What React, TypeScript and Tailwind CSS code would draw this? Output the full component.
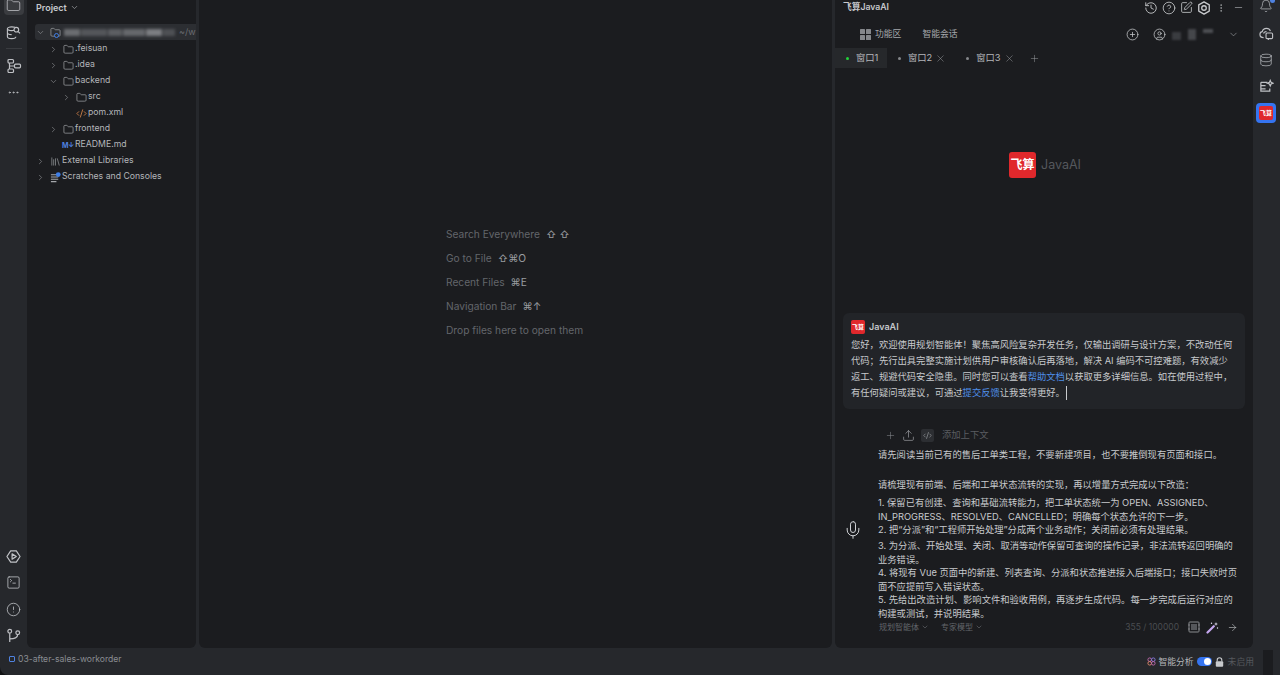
import {
  ArrowRight,
  ChevronDown,
  ChevronRight,
  CircleAlert,
  CirclePlus,
  CircleUser,
  CodeXml,
  Database,
  Ellipsis,
  Folder,
  History,
  Library,
  Mic,
  Minus,
  MoreVertical,
  Plus,
  Bell,
  SquarePen,
  SquareTerminal,
  Upload,
  X,
  CircleHelp,
} from 'lucide-react';

const FONT = "font-['Inter','Noto_Sans_CJK_SC',sans-serif]";

const Logo = ({ box, text }: { box: string; text: string }) => (
  <div className={`flex items-center justify-center bg-[#e0282c] font-bold text-white leading-none ${box} ${text}`}>
    飞算
  </div>
);

const HexPlay = () => (
  <svg width="15" height="15" viewBox="0 0 16 16" fill="none" stroke="#bfc1c5" strokeWidth="1.3">
    <path d="M5 2h6l4 6-4 6H5L1 8z" strokeLinejoin="round" />
    <path d="M6.500 5.200v5.600L11 8z" strokeLinejoin="round" />
  </svg>
);

const Branch = () => (
  <svg width="15" height="15" viewBox="0 0 16 16" fill="none" stroke="#bfc1c5" strokeWidth="1.3">
    <circle cx="4" cy="3.500" r="2" />
    <circle cx="12.500" cy="5" r="2" />
    <path d="M4 5.500V15M4 11.500c5 0 8.500-1 8.500-4.500" />
  </svg>
);

const Commit = () => (
  <svg width="15" height="15" viewBox="0 0 16 16" fill="none" stroke="#bfc1c5" strokeWidth="1.3">
    <path d="M2 3.500h7M2 3.500v9.500h9.500v-3" />
    <path d="M2 7h5M2 10.500h5" />
    <path d="M12 1.500l.9 2.100 2.100.9-2.100.9-.9 2.100-.9-2.100-2.100-.9 2.100-.9z" />
  </svg>
);

const Hexagon = () => (
  <svg width="14" height="14" viewBox="0 0 16 16" fill="none" stroke="#c8cacd" strokeWidth="1.5">
    <path d="M8 1l6 3.500v7L8 15l-6-3.500v-7z" strokeLinejoin="round" />
    <circle cx="8" cy="8" r="2.600" />
  </svg>
);

const Scratches = () => (
  <svg width="11" height="11" viewBox="0 0 12 12" fill="none">
    <path d="M1 3h6M1 5.500h8M1 8h8M1 10.500h6" stroke="#a5a7ab" strokeWidth="1.100" />
    <circle cx="9" cy="2.800" r="2.600" fill="#3f7fe8" />
  </svg>
);

const Structure = () => (
  <svg width="16" height="16" viewBox="0 0 16 16" fill="none" stroke="#bfc1c5" strokeWidth="1.200">
    <rect x="2" y="1.500" width="5.500" height="3.500" rx="1" />
    <rect x="2" y="11" width="5.500" height="3.500" rx="1" />
    <rect x="8.500" y="6.200" width="6" height="3.600" rx="1" />
    <path d="M3.500 5v6M3.500 8h5" />
  </svg>
);

const DbSearch = () => (
  <svg width="15" height="15" viewBox="0 0 16 16" fill="none" stroke="#bfc1c5" strokeWidth="1.200">
    <ellipse cx="6" cy="4" rx="4.500" ry="2" />
    <path d="M1.500 4v8.500c0 1.100 2 2 4.500 2s4.500-.9 4.500-2M1.500 8.200c0 1.100 2 2 4.500 2" />
    <circle cx="11" cy="5" r="2.500" fill="#26282c" />
    <path d="M13 7l2 2" />
  </svg>
);

const CloudChat = () => (
  <svg width="15" height="15" viewBox="0 0 16 16" fill="none" stroke="#bfc1c5" strokeWidth="1.200">
    <path d="M5 12.500C2.500 12.500 1 11 1 9c0-1.700 1.200-2.800 2.500-3C4 3.800 5.800 2.500 8 2.500c2 0 3.500 1 4.200 3" />
    <path d="M5 8c0-1 1-2 3-2" />
    <rect x="7.500" y="7.500" width="7" height="6" rx="1.200" />
    <path d="M10 13.500v1.500" />
  </svg>
);

const Quad = () => (
  <svg width="11" height="11" viewBox="0 0 11 11" fill="#85878b">
    <rect x="0" y="0" width="5" height="5" rx="0.500" />
    <rect x="6" y="0" width="5" height="5" rx="0.500" />
    <rect x="0" y="6" width="5" height="5" rx="0.500" />
    <rect x="6" y="6" width="5" height="5" rx="0.500" />
  </svg>
);

const PadlockSolid = () => (
  <svg width="9" height="10" viewBox="0 0 9 10" className="ml-[3px]">
    <path d="M2.200 4.500V3a2.300 2.300 0 0 1 4.600 0v1.500" fill="none" stroke="#c8cacd" strokeWidth="1.100" />
    <rect x="0.800" y="4.300" width="7.400" height="5.400" rx="1" fill="#c8cacd" />
  </svg>
);

const FrameIcon = () => (
  <svg width="12" height="12" viewBox="0 0 12 12" className="ml-[9px]">
    <rect x="1" y="1" width="10" height="10" rx="0.800" fill="none" stroke="#8a8c90" strokeWidth="1" />
    <rect x="3" y="3" width="6" height="6" fill="#55575b" />
    <path d="M0 4h2M0 8h2M10 4h2M10 8h2" stroke="#8a8c90" strokeWidth="0.800" />
  </svg>
);

const Wand = () => (
  <svg width="13" height="13" viewBox="0 0 13 13" className="ml-[6px]">
    <path d="M1.500 11.500L7.800 5.200" stroke="#c6a8f0" strokeWidth="2.200" strokeLinecap="round" />
    <path d="M10 1l.5 1.500L12 3l-1.500.5L10 5l-.5-1.500L8 3l1.500-.5z" fill="#e4e0f2" />
    <circle cx="5.500" cy="2.200" r="0.700" fill="#e4e0f2" />
    <circle cx="11.500" cy="7" r="0.700" fill="#e4e0f2" />
  </svg>
);

const TreeRow = ({
  indent,
  arrow,
  icon,
  label,
}: {
  indent: string;
  arrow?: 'right' | 'down';
  icon: React.ReactNode;
  label: string;
}) => (
  <div className={`flex h-4 items-center ${indent}`}>
    <span className="flex w-[10px] justify-center">
      {arrow === 'right' && <ChevronRight size={9} strokeWidth={1.5} className="text-[#9b9da1]" />}
      {arrow === 'down' && <ChevronDown size={9} strokeWidth={1.5} className="text-[#9b9da1]" />}
    </span>
    <span className="ml-[4px] mr-[1px] flex w-[12px] justify-center">{icon}</span>
    <span className="whitespace-nowrap text-[8.7px] text-[#b4b6ba]">{label}</span>
  </div>
);

const folder = <Folder size={11} strokeWidth={1.5} className="text-[#a5a7ab]" />;

const ProjectPanel = () => (
  <div className="flex h-full w-[169px] shrink-0 flex-col overflow-hidden rounded-b-[6px] bg-[#1b1c1f]">
    <div className="flex h-[15px] items-center pl-[9px] text-[9px] font-semibold text-[#c5c7cb]">
      Project
      <ChevronDown size={9} className="ml-[3px] text-[#9b9da1]" />
    </div>
    <div className="mt-[9px]">
      <div className="ml-[8px] flex h-4 items-center rounded-l-[3px] bg-[#2c2e32]">
        <span className="flex w-[10px] justify-center">
          <ChevronDown size={9} strokeWidth={1.5} className="text-[#9b9da1]" />
        </span>
        <span className="relative ml-[4px] flex w-[12px] justify-center">
          <Folder size={11} strokeWidth={1.5} className="text-[#a5a7ab]" />
          <span className="absolute bottom-[0px] left-[5px] h-[5px] w-[5px] rounded-full border border-[#3f7fe8] bg-[#2c2e32]" />
        </span>
        <div className="ml-[3px] flex h-[7px] w-[111px] items-center gap-[1px] opacity-85 blur-[1.5px]">
          <span className="h-full w-[16px] bg-[#77797d]" />
          <span className="h-full w-[26px] bg-[#5c5e62]" />
          <span className="h-full w-[14px] bg-[#66686c]" />
          <span className="h-full w-[22px] bg-[#717377]" />
          <span className="h-full w-[16px] bg-[#8a8c90]" />
          <span className="h-full w-[12px] bg-[#55575b]" />
        </div>
        <span className="ml-[4px] whitespace-nowrap text-[9px] text-[#6a6c71]">~/w</span>
      </div>
      <div className="mt-[1px]">
        <TreeRow indent="pl-[21px]" arrow="right" icon={folder} label=".feisuan" />
        <TreeRow indent="pl-[21px]" arrow="right" icon={folder} label=".idea" />
        <TreeRow indent="pl-[21px]" arrow="down" icon={folder} label="backend" />
        <TreeRow indent="pl-[34px]" arrow="right" icon={folder} label="src" />
        <TreeRow indent="pl-[34px]" icon={<CodeXml size={11} strokeWidth={2} className="text-[#c77c46]" />} label="pom.xml" />
        <TreeRow indent="pl-[21px]" arrow="right" icon={folder} label="frontend" />
        <TreeRow
          indent="pl-[21px]"
          icon={<span className="text-[7px] font-bold leading-none tracking-[-0.5px] text-[#4f82e0]">M↓</span>}
          label="README.md"
        />
        <TreeRow indent="pl-[8px]" arrow="right" icon={<Library size={11} strokeWidth={1.4} className="text-[#a5a7ab]" />} label="External Libraries" />
        <TreeRow indent="pl-[8px]" arrow="right" icon={<Scratches />} label="Scratches and Consoles" />
      </div>
    </div>
  </div>
);

const Hint = ({ label, keys }: { label: string; keys?: string }) => (
  <div className="flex h-6 items-center whitespace-nowrap text-[10.2px] text-[#63666b]">
    {label}
    {keys && <span className="ml-[6px] text-[10.2px] text-[#9a9ca0]">{keys}</span>}
  </div>
);

const Editor = () => (
  <div className="ml-[3px] flex h-full w-[633px] shrink-0 justify-center rounded-b-[6px] bg-[#1b1c1f] pt-[223px]">
    <div className="w-[139px]">
      <Hint label="Search Everywhere" keys="⇧ ⇧" />
      <Hint label="Go to File" keys="⇧⌘O" />
      <Hint label="Recent Files" keys="⌘E" />
      <Hint label="Navigation Bar" keys="⌘↑" />
      <Hint label="Drop files here to open them" />
    </div>
  </div>
);

const Tab = ({ label, active, closable }: { label: string; active?: boolean; closable?: boolean }) => (
  <div className={`flex h-5 items-center ${active ? 'w-[52px] bg-[#26282b] pl-[11px]' : 'ml-[11px]'}`}>
    <span className={`h-[3px] w-[3px] rounded-full ${active ? 'bg-[#22d43a]' : 'bg-[#85878b]'}`} />
    <span className="ml-[7px] whitespace-nowrap text-[9.3px] text-[#b4b6ba]">{label}</span>
    {closable && <X size={11} strokeWidth={1} className="ml-[3px] text-[#a5a7ab]" />}
  </div>
);

const INPUT_LINES = [
  { t: '请先阅读当前已有的售后工单类工程，不要新建项目，也不要推倒现有页面和接口。', c: 'mb-[16.5px]' },
  { t: '请梳理现有前端、后端和工单状态流转的实现，再以增量方式完成以下改造：', c: 'mb-[5px]' },
  { t: '1. 保留已有创建、查询和基础流转能力，把工单状态统一为 OPEN、ASSIGNED、', c: '' },
  { t: 'IN_PROGRESS、RESOLVED、CANCELLED；明确每个状态允许的下一步。', c: '' },
  { t: '2. 把“分派”和“工程师开始处理”分成两个业务动作；关闭前必须有处理结果。', c: 'mb-[2.5px]' },
  { t: '3. 为分派、开始处理、关闭、取消等动作保留可查询的操作记录，非法流转返回明确的', c: '' },
  { t: '业务错误。', c: '' },
  { t: '4. 将现有 Vue 页面中的新建、列表查询、分派和状态推进接入后端接口；接口失败时页', c: '' },
  { t: '面不应提前写入错误状态。', c: '' },
  { t: '5. 先给出改造计划、影响文件和验收用例，再逐步生成代码。每一步完成后运行对应的', c: '' },
  { t: '构建或测试，并说明结果。', c: '' },
];

const AiPanel = () => (
  <div className="ml-[3px] flex h-full w-[418px] shrink-0 flex-col rounded-b-[6px] bg-[#1b1c1f]">
    {/* title */}
    <div className="flex h-[15px] items-center pl-[8px] pr-[9px]">
      <span className="text-[8.7px] font-semibold text-[#c5c7cb]">飞算JavaAI</span>
      <div className="ml-auto flex items-center gap-[4px] text-[#c8cacd]">
        <History size={14} strokeWidth={1.5} />
        <CircleHelp size={14} strokeWidth={1.4} />
        <SquarePen size={13} strokeWidth={1.5} />
        <Hexagon />
        <MoreVertical size={10} strokeWidth={1.3} className="ml-[1px]" />
        <Minus size={11} strokeWidth={1.2} className="ml-[3px]" />
      </div>
    </div>
    {/* toolbar */}
    <div className="mt-[11px] flex h-[16px] items-center pl-[25px] pr-[14px]">
      <Quad />
      <span className="ml-[4px] text-[8.8px] text-[#a5a7ab]">功能区</span>
      <span className="ml-[21px] text-[8.8px] text-[#a5a7ab]">智能会话</span>
      <CirclePlus size={13} strokeWidth={1.4} className="ml-auto text-[#c8cacd]" />
      <CircleUser size={13} strokeWidth={1.4} className="ml-[14px] text-[#c8cacd]" />
      <div className="ml-[6px] flex h-[12px] w-[41px] items-end gap-[7px] blur-[1px]">
        <span className="h-[8px] w-[9px] bg-[#3a3c40]" />
        <span className="h-[11px] w-[9px] bg-[#45474b]" />
        <span className="mb-[7px] h-[4px] w-[10px] bg-[#4e5054]" />
      </div>
      <ChevronDown size={11} strokeWidth={1.3} className="ml-[15px] text-[#a5a7ab]" />
    </div>
    {/* tabs */}
    <div className="mt-[6px] flex h-5 items-center">
      <Tab label="窗口1" active />
      <Tab label="窗口2" closable />
      <div className="ml-[9px]">
        <Tab label="窗口3" closable />
      </div>
      <Plus size={11} strokeWidth={1} className="ml-[14px] text-[#a5a7ab]" />
    </div>
    {/* empty state logo */}
    <div className="mt-[84px] flex h-[26px] items-center justify-center pl-[2px]">
      <Logo box="h-[26px] w-[27px] rounded-[3px]" text="text-[12px]" />
      <span className="ml-[5px] text-[12.5px] text-[#55585d]">JavaAI</span>
    </div>
    {/* welcome message */}
    <div className="mx-[8px] mt-[135px] h-[96px] rounded-[6px] bg-[#222428] pl-[8px] pt-[7px]">
      <div className="flex h-[14px] items-center">
        <Logo box="h-[14px] w-[14px] rounded-[2px]" text="text-[6px]" />
        <span className="ml-[4px] text-[9px] font-semibold text-[#c5c7cb]">JavaAI</span>
      </div>
      <div className="mt-[3px] whitespace-nowrap text-[9.3px] leading-[16px] text-[#c8cacd]">
        <div>您好，欢迎使用规划智能体！聚焦高风险复杂开发任务，仅输出调研与设计方案，不改动任何</div>
        <div>代码；先行出具完整实施计划供用户审核确认后再落地，解决 AI 编码不可控难题，有效减少</div>
        <div>
          返工、规避代码安全隐患。同时您可以查看<span className="text-[#4f8fe8]">帮助文档</span>
          以获取更多详细信息。如在使用过程中，
        </div>
        <div className="flex items-center">
          有任何疑问或建议，可通过<span className="text-[#4f8fe8]">提交反馈</span>让我变得更好。
          <span className="ml-[1px] h-[14px] w-px bg-[#c8cacd]" />
        </div>
      </div>
    </div>
    {/* input */}
    <div className="mt-[19px] flex flex-1 overflow-hidden">
      <div className="flex w-[43px] shrink-0 items-center justify-center pb-[17px] pr-[7px]">
        <Mic size={20} strokeWidth={1.2} className="text-[#d0d2d6]" />
      </div>
      <div className="flex-1 whitespace-nowrap">
        <div className="flex h-[14px] items-center pl-[7px]">
          <Plus size={11} strokeWidth={1.2} className="text-[#85878b]" />
          <Upload size={13} strokeWidth={1.2} className="ml-[6px] text-[#a5a7ab]" />
          <span className="ml-[6px] flex h-[13px] w-[13px] items-center justify-center rounded-[2px] bg-[#2c2e32]">
            <CodeXml size={9} strokeWidth={1.6} className="text-[#a5a7ab]" />
          </span>
          <span className="ml-[8px] text-[9.3px] text-[#5a5d62]">添加上下文</span>
        </div>
        <div className="mt-[5.5px] text-[9.3px] leading-[13.5px] text-[#c8cacd]">
          {INPUT_LINES.map((line) => (
            <div key={line.t} className={line.c}>
              {line.t}
            </div>
          ))}
        </div>
        <div className="-mt-[1px] flex h-[16px] items-center pl-[1px] pr-[15px] text-[8px] text-[#62656a]">
          规划智能体
          <ChevronDown size={8} className="ml-[2px]" />
          <span className="ml-[12px]">专家模型</span>
          <ChevronDown size={8} className="ml-[2px]" />
          <span className="ml-auto text-[8.5px] text-[#4a4c50]">355 / 100000</span>
          <FrameIcon />
          <Wand />
          <ArrowRight size={11} strokeWidth={1.3} className="ml-[8px] text-[#c8cacd]" />
        </div>
      </div>
    </div>
  </div>
);

const LeftRail = () => (
  <div className="flex h-full w-[27px] shrink-0 flex-col items-center justify-between pb-[5px]">
    <div className="flex flex-col items-center">
      <div className="-mt-[5px] flex h-[20px] w-[20px] items-center justify-center rounded-[4px] bg-[#3a3c40]">
        <Folder size={15} strokeWidth={1.2} className="text-[#c5c7cb]" />
      </div>
      <div className="mt-[10px]">
        <DbSearch />
      </div>
      <div className="mt-[8px] h-px w-[16px] bg-[#3a3c40]" />
      <div className="mt-[9px]">
        <Structure />
      </div>
      <Ellipsis size={13} strokeWidth={1.5} className="mt-[12px] text-[#bfc1c5]" />
    </div>
    <div className="flex flex-col items-center gap-[11.5px]">
      <HexPlay />
      <SquareTerminal size={15} strokeWidth={1.3} className="text-[#bfc1c5]" />
      <CircleAlert size={15} strokeWidth={1.3} className="text-[#bfc1c5]" />
      <Branch />
    </div>
  </div>
);

const RightRail = () => (
  <div className="flex h-full w-[27px] shrink-0 flex-col items-center pr-[1px]">
    <div className="relative -mt-[2px] flex h-[16px] items-center">
      <Bell size={14} strokeWidth={1.2} className="text-[#bfc1c5]" />
      <span className="absolute right-[-2px] top-[0px] h-[5px] w-[5px] rounded-full bg-[#4f82e0]" />
    </div>
    <div className="mt-[12px]">
      <CloudChat />
    </div>
    <Database size={14} strokeWidth={1.2} className="mt-[12px] text-[#bfc1c5]" />
    <div className="mt-[12px]">
      <Commit />
    </div>
    <div className="mt-[9px] flex h-[20px] w-[20px] items-center justify-center rounded-[4px] bg-[#3574f0]">
      <Logo box="h-[14px] w-[14px] rounded-[2px]" text="text-[6px]" />
    </div>
  </div>
);

const StatusBar = () => (
  <div className="flex h-[27px] shrink-0 items-start">
    <div className="flex h-[22px] items-center pl-[9px]">
      <span className="h-[6px] w-[6px] rounded-[1px] border border-[#4f82e0]" />
      <span className="ml-[3px] text-[8.6px] text-[#8a8d92]">03-after-sales-workorder</span>
    </div>
    <div className="ml-auto flex h-full items-start pr-[7px]">
      <div className="flex h-[27px] items-center text-[8.8px]">
        <svg width="9" height="9" viewBox="0 0 10 10" fill="none" stroke="#c56bb0" strokeWidth="1">
          <circle cx="3" cy="3" r="2" />
          <circle cx="7" cy="3" r="2" stroke="#8a7be0" />
          <circle cx="3" cy="7" r="2" stroke="#e08a6b" />
          <circle cx="7" cy="7" r="2" />
        </svg>
        <span className="ml-[2px] text-[#b4b6ba]">智能分析</span>
        <span className="ml-[3px] flex h-[9px] w-[15px] items-center justify-end rounded-full bg-[#3574f0] pr-[1px]">
          <span className="h-[7px] w-[7px] rounded-full bg-white" />
        </span>
        <PadlockSolid />
        <span className="ml-[4px] text-[#55585d]">未启用</span>
      </div>
      <div className="ml-[9px] mt-[2px] h-[25px] w-[10px] bg-[#1b1c1f]" />
    </div>
  </div>
);

export default function App() {
  return (
    <div className={`${FONT} h-[675px] w-[1280px] overflow-hidden bg-[#111214]`}>
      <div className="flex h-full w-full flex-col overflow-hidden rounded-bl-[8px] bg-[#26282c]">
        <div className="flex min-h-0 flex-1">
          <LeftRail />
          <ProjectPanel />
          <Editor />
          <AiPanel />
          <RightRail />
        </div>
        <StatusBar />
      </div>
    </div>
  );
}
